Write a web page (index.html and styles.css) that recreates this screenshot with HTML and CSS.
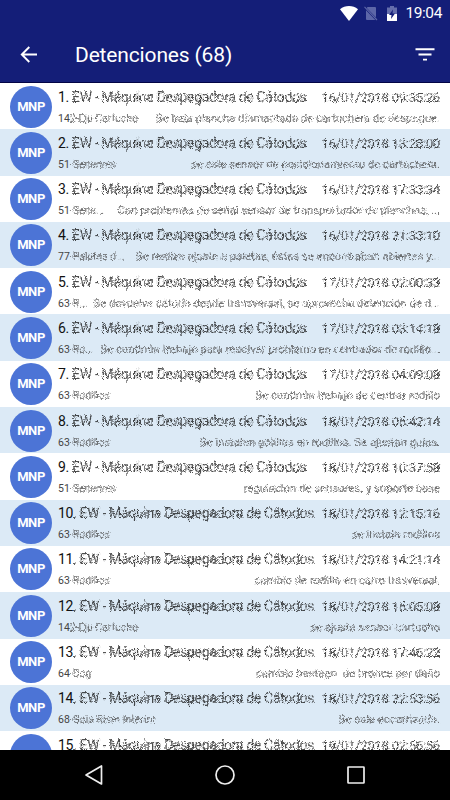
FILE: index.html
```
<!DOCTYPE html>
<html lang="es">
<head>
    <meta charset="utf-8">
    <meta name="viewport" content="width=device-width, initial-scale=1.0">
    <title>Detenciones</title>
    <link rel="stylesheet" href="styles.css">
</head>
<body>
    <svg class="defs" width="0" height="0">
        <filter id="grain" x="-2%" y="-20%" width="104%" height="140%" color-interpolation-filters="sRGB">
            <feTurbulence type="fractalNoise" baseFrequency="0.83" numOctaves="3" seed="4" result="noise"/>
            <feDisplacementMap in="SourceGraphic" in2="noise" scale="4" xChannelSelector="R" yChannelSelector="G"/>
        </filter>
    </svg>

    <div class="header">
        <div class="status-bar">
            <svg class="wifi" width="18" height="15" viewBox="0 0 18 15"><path d="M0 3.2C5-1 13-1 18 3.2L9 15z" fill="#fff"/></svg>
            <svg class="sim" width="14" height="15" viewBox="0 0 14 15"><path d="M3.5 1H11q1 0 1 1v9.4L2.7 2zM2 4.3L11.4 14H3q-1 0-1-1z" fill="#5d66a8"/><path d="M.5.8L13 14" stroke="#5d66a8" stroke-width="1.1"/></svg>
            <svg class="battery" width="10" height="15" viewBox="0 0 10 15"><path d="M0 1.5h3V0h4v1.500h3V8H0z" fill="#656eac"/><path d="M0 8h10v7H0z" fill="#fff"/><path d="M6 3.500L2 9h2.500L4 13l4-5.500H5.500z" fill="#141e78"/></svg>
            <span class="time">19:04</span>
        </div>
        <div class="toolbar">
            <svg class="back" width="18" height="17" viewBox="0 0 18 17"><path d="M17 8.500H2M9.300 1L1.800 8.500l7.500 7.500" fill="none" stroke="#fff" stroke-width="1.9"/></svg>
            <h1>Detenciones (68)</h1>
            <svg class="filter" width="20" height="13" viewBox="0 0 20 13"><path d="M.5 1.200h19M3.500 6.500h13M8 11.600h4" stroke="#fff" stroke-width="1.900"/></svg>
        </div>
    </div>

    <div class="list">
        <div class="row">
            <div class="avatar">MNP</div>
            <div class="info">
                <div class="line title"><span>1. <i>EW - Máquina Despegadora de Cátodos</i></span><i class="date">16/01/2018 09:35:26</i></div>
                <div class="line detail"><span>14<i>2-Eje Cartucho</i></span><i class="note">Se baja plancha diamantada de cartuchera de despegue.</i></div>
            </div>
        </div>
        <div class="row">
            <div class="avatar">MNP</div>
            <div class="info">
                <div class="line title"><span>2. <i>EW - Máquina Despegadora de Cátodos</i></span><i class="date">16/01/2018 13:28:00</i></div>
                <div class="line detail"><span>51<i>-Sensores</i></span><i class="note">se sale sensor de posicionamiento de cartuchera.</i></div>
            </div>
        </div>
        <div class="row">
            <div class="avatar">MNP</div>
            <div class="info">
                <div class="line title"><span>3. <i>EW - Máquina Despegadora de Cátodos</i></span><i class="date">16/01/2018 17:33:34</i></div>
                <div class="line detail"><span>51<i>-Sens...</i></span><i class="note">Con problemas de señal sensor de transportador de planchas, ...</i></div>
            </div>
        </div>
        <div class="row">
            <div class="avatar">MNP</div>
            <div class="info">
                <div class="line title"><span>4. <i>EW - Máquina Despegadora de Cátodos</i></span><i class="date">16/01/2018 21:33:10</i></div>
                <div class="line detail"><span>77<i>-Paletas d...</i></span><i class="note">Se realiza ajuste a paletas, éstas se encontraban abiertas y...</i></div>
            </div>
        </div>
        <div class="row">
            <div class="avatar">MNP</div>
            <div class="info">
                <div class="line title"><span>5. <i>EW - Máquina Despegadora de Cátodos</i></span><i class="date">17/01/2018 02:00:33</i></div>
                <div class="line detail"><span>63<i>-R...</i></span><i class="note">Se devuelve cátodo desde transversal, se aprovecha detención de d...</i></div>
            </div>
        </div>
        <div class="row">
            <div class="avatar">MNP</div>
            <div class="info">
                <div class="line title"><span>6. <i>EW - Máquina Despegadora de Cátodos</i></span><i class="date">17/01/2018 03:14:18</i></div>
                <div class="line detail"><span>63<i>-Ro...</i></span><i class="note">Se continúa trabajo para resolver problema en centrador de rodillo...</i></div>
            </div>
        </div>
        <div class="row">
            <div class="avatar">MNP</div>
            <div class="info">
                <div class="line title"><span>7. <i>EW - Máquina Despegadora de Cátodos</i></span><i class="date">17/01/2018 04:09:08</i></div>
                <div class="line detail"><span>63<i>-Rodillos</i></span><i class="note">Se continúa trabajo de centrar rodillo</i></div>
            </div>
        </div>
        <div class="row">
            <div class="avatar">MNP</div>
            <div class="info">
                <div class="line title"><span>8. <i>EW - Máquina Despegadora de Cátodos</i></span><i class="date">18/01/2018 05:42:14</i></div>
                <div class="line detail"><span>63<i>-Rodillos</i></span><i class="note">Se instalan golillas en rodillos. Se ajustan guías.</i></div>
            </div>
        </div>
        <div class="row">
            <div class="avatar">MNP</div>
            <div class="info">
                <div class="line title"><span>9. <i>EW - Máquina Despegadora de Cátodos</i></span><i class="date">18/01/2018 10:37:58</i></div>
                <div class="line detail"><span>51<i>-Sensores</i></span><i class="note">regulacion de sensores. y soporte base</i></div>
            </div>
        </div>
        <div class="row">
            <div class="avatar">MNP</div>
            <div class="info">
                <div class="line title"><span>10<i>. EW - Máquina Despegadora de Cátodos</i></span><i class="date">18/01/2018 12:15:16</i></div>
                <div class="line detail"><span>63<i>-Rodillos</i></span><i class="note">se instala rodillos</i></div>
            </div>
        </div>
        <div class="row">
            <div class="avatar">MNP</div>
            <div class="info">
                <div class="line title"><span>11<i>. EW - Máquina Despegadora de Cátodos</i></span><i class="date">18/01/2018 14:21:14</i></div>
                <div class="line detail"><span>63<i>-Rodillos</i></span><i class="note">cambio de rodillo en carro trasversal.</i></div>
            </div>
        </div>
        <div class="row">
            <div class="avatar">MNP</div>
            <div class="info">
                <div class="line title"><span>12<i>. EW - Máquina Despegadora de Cátodos</i></span><i class="date">18/01/2018 15:05:08</i></div>
                <div class="line detail"><span>14<i>2-Eje Cartucho</i></span><i class="note">se ajusta sensor cartucho</i></div>
            </div>
        </div>
        <div class="row">
            <div class="avatar">MNP</div>
            <div class="info">
                <div class="line title"><span>13<i>. EW - Máquina Despegadora de Cátodos</i></span><i class="date">18/01/2018 17:46:22</i></div>
                <div class="line detail"><span>64<i>-Dog</i></span><i class="note">cambio bastago&nbsp; de bronce por daño</i></div>
            </div>
        </div>
        <div class="row">
            <div class="avatar">MNP</div>
            <div class="info">
                <div class="line title"><span>14<i>. EW - Máquina Despegadora de Cátodos</i></span><i class="date">18/01/2018 22:53:56</i></div>
                <div class="line detail"><span>68<i>-Guia Riser Interior</i></span><i class="note">Se sale encarrizado.</i></div>
            </div>
        </div>
        <div class="row">
            <div class="avatar"></div>
            <div class="info">
                <div class="line title"><span>15<i>. EW - Máquina Despegadora de Cátodos</i></span><i class="date">19/01/2018 02:56:56</i></div>
            </div>
        </div>
    </div>

    <div class="nav-bar">
        <svg width="20" height="22" viewBox="0 0 20 22"><path d="M17.500 2v18L2 11z" fill="none" stroke="#eee" stroke-width="1.700" stroke-linejoin="round"/></svg>
        <svg width="22" height="22" viewBox="0 0 22 22"><circle cx="11" cy="11" r="9" fill="none" stroke="#eee" stroke-width="1.700"/></svg>
        <svg width="20" height="20" viewBox="0 0 20 20"><rect x="2" y="2" width="16" height="16" rx=".5" fill="none" stroke="#eee" stroke-width="1.700"/></svg>
    </div>
</body>
</html>
```
FILE: styles.css
```
* {
    box-sizing: border-box;
    margin: 0;
    padding: 0;
}
body {
    width: 450px;
    height: 800px;
    display: flex;
    flex-direction: column;
    overflow: hidden;
    background-color: #fff;
    font-family: Roboto, sans-serif;
    color: #111;
}
.defs {
    position: absolute;
}
.header {
    height: 83px;
    flex: none;
    background-color: #141e78;
    border-bottom: 1px solid #030445;
    color: #fff;
}
.status-bar {
    height: 26px;
    display: flex;
    justify-content: flex-end;
    align-items: center;
    padding-right: 8px;
}
.wifi {
    margin-right: 6px;
}
.sim {
    margin-right: 9px;
}
.battery {
    margin-right: 8px;
}
.time {
    font-size: 15.5px;
    letter-spacing: -0.4px;
    line-height: 26px;
}
.toolbar {
    height: 56px;
    display: flex;
    align-items: center;
    padding: 0 15px 0 20px;
}
.toolbar h1 {
    margin-left: 37px;
    padding-top: 2px;
    font-size: 21px;
    font-weight: 400;
    letter-spacing: -0.15px;
    line-height: 26px;
}
.filter {
    margin-left: auto;
}
.list {
    flex: 1;
    min-height: 0;
    overflow: hidden;
}
.row {
    height: 46.3px;
    display: flex;
    padding: 2.5px 10px 0;
}
.row:nth-child(even) {
    background-color: #dceaf6;
}
.avatar {
    flex: none;
    width: 42px;
    height: 42px;
    border-radius: 50%;
    background-color: #4c74d6;
    color: #fff;
    font-size: 13px;
    font-weight: 700;
    letter-spacing: -0.4px;
    line-height: 42px;
    text-align: center;
}
.info {
    flex: 1;
    min-width: 0;
    margin-left: 6px;
}
.line {
    display: flex;
    justify-content: space-between;
    white-space: pre;
}
.line i {
    display: inline-block;
    font-style: normal;
    opacity: 0.75;
    filter: url(#grain);
}
.title {
    height: 23px;
    font-size: 14px;
    letter-spacing: -0.33px;
    line-height: 23px;
}
.date {
    font-size: 13.5px;
    letter-spacing: -0.45px;
}
.detail {
    height: 18px;
    font-size: 10.5px;
    line-height: 19px;
    color: #444;
}
.note {
    font-size: 11.3px;
}
.nav-bar {
    height: 50px;
    flex: none;
    display: flex;
    justify-content: center;
    align-items: center;
    gap: 110px;
    background-color: #000;
}
```
